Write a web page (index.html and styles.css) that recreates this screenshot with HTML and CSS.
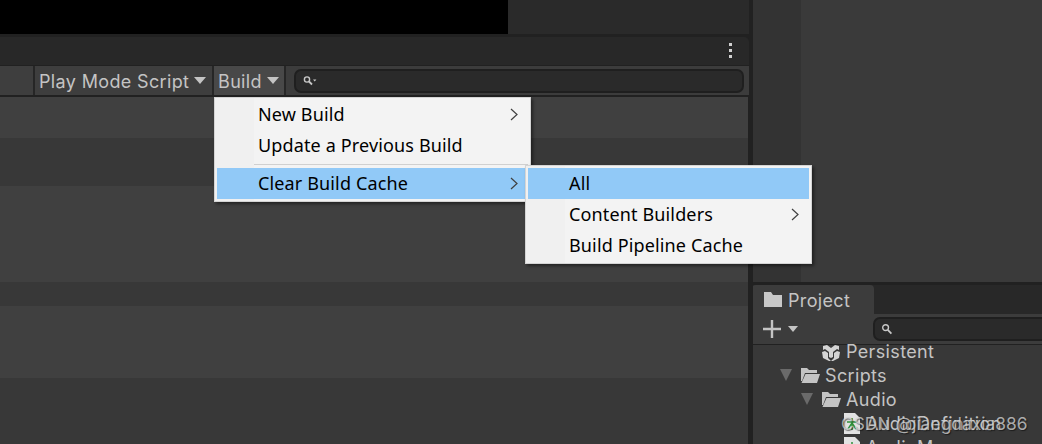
FILE: index.html
```html
<!DOCTYPE html>
<html lang="en">
<head>
    <meta charset="UTF-8">
    <meta name="viewport" content="width=device-width, initial-scale=1.0">
    <title>Addressables Groups</title>
    <link rel="stylesheet" href="styles.css">
</head>
<body>
    <div class="editor">
        <!-- Left: groups window -->
        <div class="left-pane">
            <div class="top-strip">
                <div class="scene-view"></div>
            </div>
            <div class="window-header">
                <div class="kebab"><span></span><span></span><span></span></div>
            </div>
            <div class="toolbar">
                <div class="tool-btn tool-btn-first"></div>
                <div class="tool-btn tool-btn-play">Play Mode Script<span class="caret"></span></div>
                <div class="tool-btn tool-btn-build">Build<span class="caret"></span></div>
                <div class="search search-main">
                    <svg class="search-icon" width="16" height="12" viewBox="0 0 16 12">
                        <circle cx="5" cy="4.500" r="2.600" fill="none" stroke="#c8c8c8" stroke-width="1.400"/>
                        <path d="M7 6.500l3 3" stroke="#c8c8c8" stroke-width="1.800"/>
                        <path d="M11 4.500h3.400l-1.700 2z" fill="#c8c8c8"/>
                    </svg>
                </div>
            </div>
            <div class="rows">
                <div class="band band-light h41"></div>
                <div class="band band-dark h48"></div>
                <div class="band band-light h96"></div>
                <div class="band band-dark h24"></div>
                <div class="band band-light h72"></div>
                <div class="band band-dark h66"></div>
            </div>
        </div>

        <div class="divider"></div>

        <!-- Right: inspector and project -->
        <div class="right-pane">
            <div class="inspector">
                <div class="inspector-side"></div>
                <div class="inspector-main"></div>
            </div>
            <div class="project">
                <div class="tab-bar">
                    <div class="tab">
                        <svg width="18" height="15" viewBox="0 0 18 15">
                            <path d="M0 0h7l2 3h9v12H0z" fill="#c8c8c8"/>
                        </svg>
                        Project
                    </div>
                </div>
                <div class="project-toolbar">
                    <svg class="plus" width="18" height="18" viewBox="0 0 18 18">
                        <path d="M9 0v18M0 9h18" stroke="#c4c4c4" stroke-width="2.400"/>
                    </svg>
                    <span class="caret caret-small"></span>
                    <div class="search search-project">
                        <svg class="search-icon" width="12" height="12" viewBox="0 0 12 12">
                            <circle cx="4.600" cy="4.600" r="2.900" fill="none" stroke="#c8c8c8" stroke-width="1.400"/>
                            <path d="M6.800 6.800l3.600 3.800" stroke="#c8c8c8" stroke-width="1.800"/>
                        </svg>
                    </div>
                </div>
                <div class="tree">
                    <div class="tree-row depth-2">
                        <svg class="tree-icon tree-icon-wide" width="18" height="24" viewBox="0 0 18 24">
                            <path d="M1 7l4-1 4 3 4-3 4 1v4l-2-1-4 3v5l-2 1-2-1v-5L3 10l-2 1zM0 13l3-1 3 2v5l3 3H7l-6-3zM18 13l-3-1-3 2v5l-3 3h2l6-3z" fill="#d4d4d4"/>
                        </svg>
                        <span>Persistent</span>
                    </div>
                    <div class="tree-row depth-0">
                        <span class="arrow-down"></span>
                        <svg class="tree-icon" width="20" height="18" viewBox="0 0 20 18">
                            <path d="M1 2h6l2 2h8v3H5L2 15H1zM5.500 8H20l-3 9H1.500z" fill="#c4c4c4"/>
                        </svg>
                        <span>Scripts</span>
                    </div>
                    <div class="tree-row depth-1">
                        <span class="arrow-down"></span>
                        <svg class="tree-icon" width="20" height="18" viewBox="0 0 20 18">
                            <path d="M1 2h6l2 2h8v3H5L2 15H1zM5.500 8H20l-3 9H1.500z" fill="#c4c4c4"/>
                        </svg>
                        <span>Audio</span>
                    </div>
                    <div class="tree-row depth-3">
                        <svg class="tree-icon" width="18" height="21" viewBox="0 0 18 21">
                            <path d="M1 0h11l5 5v16H1z" fill="#e2e2e2"/>
                            <path d="M4 9h10M9 5v12M9 10l-4 6M9 10l4 6" stroke="#2f8f3a" stroke-width="1.500" fill="none"/>
                        </svg>
                        <span>AudioDefinition</span>
                    </div>
                    <div class="tree-row depth-3">
                        <svg class="tree-icon" width="18" height="21" viewBox="0 0 18 21">
                            <path d="M1 0h11l5 5v16H1z" fill="#e2e2e2"/>
                            <path d="M4 9h10M9 5v12M9 10l-4 6M9 10l4 6" stroke="#2f8f3a" stroke-width="1.500" fill="none"/>
                        </svg>
                        <span>AudioManager</span>
                    </div>
                </div>
            </div>
        </div>
    </div>

    <!-- Build menu -->
    <div class="menu menu-build">
        <div class="menu-item">New Build
            <svg class="chevron" width="8" height="13" viewBox="0 0 8 13"><path d="M1 1l6 5.500-6 5.500" fill="none" stroke="#404040" stroke-width="1.200"/></svg>
        </div>
        <div class="menu-item">Update a Previous Build</div>
        <div class="menu-separator"></div>
        <div class="menu-item menu-item-active">Clear Build Cache
            <svg class="chevron" width="8" height="13" viewBox="0 0 8 13"><path d="M1 1l6 5.500-6 5.500" fill="none" stroke="#404040" stroke-width="1.200"/></svg>
        </div>
    </div>

    <!-- Clear Build Cache submenu -->
    <div class="menu menu-cache">
        <div class="menu-item menu-item-active">All</div>
        <div class="menu-item">Content Builders
            <svg class="chevron" width="8" height="13" viewBox="0 0 8 13"><path d="M1 1l6 5.500-6 5.500" fill="none" stroke="#404040" stroke-width="1.200"/></svg>
        </div>
        <div class="menu-item">Build Pipeline Cache</div>
    </div>

    <div class="watermark">CSDN @jiangdaxia886</div>
</body>
</html>
```

FILE: styles.css
```css
body {
    margin: 0;
    width: 1042px;
    height: 444px;
    position: relative;
    overflow: hidden;
    background-color: #212121;
    font-family: 'Inter', 'Liberation Sans', sans-serif;
    font-size: 18px;
    letter-spacing: 0.35px;
    color: #c4c4c4;
}

.editor {
    display: flex;
    height: 444px;
}

/* Left pane */
.left-pane {
    width: 749px;
    display: flex;
    flex-direction: column;
}

.top-strip {
    height: 34px;
    background-color: #2a2a2a;
}

.scene-view {
    width: 508px;
    height: 34px;
    background-color: #000;
}

.window-header {
    height: 28px;
    margin-top: 3px;
    display: flex;
    align-items: center;
    justify-content: flex-end;
    padding-right: 17px;
    background-color: #282828;
    border-radius: 0 5px 0 0;
}

.kebab {
    display: flex;
    flex-direction: column;
    gap: 3px;
}

.kebab span {
    width: 3px;
    height: 3px;
    background-color: #d0d0d0;
}

.toolbar {
    height: 30px;
    margin-top: 1px;
    display: flex;
    background-color: #3c3c3c;
}

.tool-btn {
    display: flex;
    align-items: center;
    padding: 3px 0 0 4px;
    background-color: #3e3e3e;
    border-right: 2px solid #262626;
    box-sizing: border-box;
}

.tool-btn-first {
    width: 35px;
}

.tool-btn-play {
    width: 179px;
}

.tool-btn-build {
    width: 72px;
    background-color: #484848;
}

.caret {
    width: 0;
    height: 0;
    margin-left: 5px;
    margin-top: -3px;
    border-left: 6px solid transparent;
    border-right: 6px solid transparent;
    border-top: 7px solid #c4c4c4;
}

.search {
    display: flex;
    align-items: center;
    box-sizing: border-box;
    background-color: #2a2a2a;
    border: 2px solid #1f1f1f;
    border-radius: 7px;
}

.search-main {
    width: 450px;
    height: 24px;
    margin: 3px 0 0 8px;
    padding-left: 6px;
}

.rows {
    flex: 1;
    margin-top: 1px;
    border-top: 1px solid #212121;
    padding-right: 1px;
}

.band-light { background-color: #404040; }
.band-dark { background-color: #383838; }

.h41 { height: 41px; }
.h48 { height: 48px; }
.h96 { height: 96px; }
.h24 { height: 24px; }
.h72 { height: 72px; }
.h66 { height: 66px; }

.divider {
    width: 4px;
    background-color: #212121;
}

/* Right pane */
.right-pane {
    flex: 1;
    display: flex;
    flex-direction: column;
}

.inspector {
    height: 282px;
    display: flex;
}

.inspector-side {
    width: 48px;
    background-color: #333;
}

.inspector-main {
    flex: 1;
    background-color: #3a3a3a;
}

.project {
    flex: 1;
    margin-top: 3px;
    display: flex;
    flex-direction: column;
    overflow: hidden;
    background-color: #383838;
}

.tab-bar {
    height: 29px;
    flex-shrink: 0;
    background-color: #282828;
}

.tab {
    width: 122px;
    height: 29px;
    margin-left: -1px;
    display: flex;
    align-items: center;
    gap: 6px;
    padding: 2px 0 0 12px;
    box-sizing: border-box;
    background-color: #3c3c3c;
    border-radius: 4px 4px 0 0;
}

.tab svg {
    margin-top: -2px;
}

.project-toolbar {
    height: 30px;
    flex-shrink: 0;
    display: flex;
    align-items: center;
    padding-left: 10px;
    background-color: #3c3c3c;
    border-bottom: 1px solid #212121;
}

.caret-small {
    margin-top: -1px;
    margin-left: 7px;
    border-left-width: 5px;
    border-right-width: 5px;
    border-top-width: 6px;
}

.search-project {
    flex: 1;
    height: 24px;
    margin: -1px -8px 0 75px;
    padding-left: 6px;
}

.tree {
    margin-top: -6px;
}

.tree-row {
    height: 24px;
    display: flex;
    align-items: center;
}

.depth-0 { padding-left: 27px; }
.depth-1 { padding-left: 48px; }
.depth-2 { padding-left: 69px; }
.depth-3 { padding-left: 90px; }

.arrow-down {
    width: 0;
    height: 0;
    margin-right: 8px;
    border-left: 6.500px solid transparent;
    border-right: 6.500px solid transparent;
    border-top: 12px solid #6a6a6a;
}

.tree-icon {
    margin-right: 5px;
    flex-shrink: 0;
}

.tree-icon-wide {
    margin-right: 6px;
}

/* Popup menus */
.menu {
    position: absolute;
    box-sizing: border-box;
    padding: 2px;
    border: 1px solid #d4d4d4;
    background: linear-gradient(to right, #f0f0f0 39px, #f3f3f3 39px);
    box-shadow: 2px 2px 3px rgba(0, 0, 0, 0.45);
    font-family: 'Noto Sans', 'Open Sans', sans-serif;
    letter-spacing: 0.14px;
    color: #000;
}

.menu-build {
    left: 214px;
    top: 97px;
    width: 317px;
    height: 105px;
    padding-top: 1px;
}

.menu-cache {
    left: 525px;
    top: 165px;
    width: 287px;
    height: 99px;
}

.menu-item {
    height: 31px;
    box-sizing: border-box;
    display: flex;
    align-items: center;
    justify-content: space-between;
    padding: 0 10px 2px 41px;
}

.chevron {
    margin-top: 2px;
}

.menu-item-active {
    background-color: #91c9f7;
}

.menu-separator {
    height: 1px;
    margin: 3px 0 3px 37px;
    background-color: #d0d0d0;
}

.watermark {
    position: absolute;
    left: 841px;
    top: 413px;
    color: rgba(215, 215, 215, 0.75);
    font-size: 17.400px;
    letter-spacing: 0;
    white-space: nowrap;
    text-shadow: 1px 1px 1px rgba(0, 0, 0, 0.5);
}
```
